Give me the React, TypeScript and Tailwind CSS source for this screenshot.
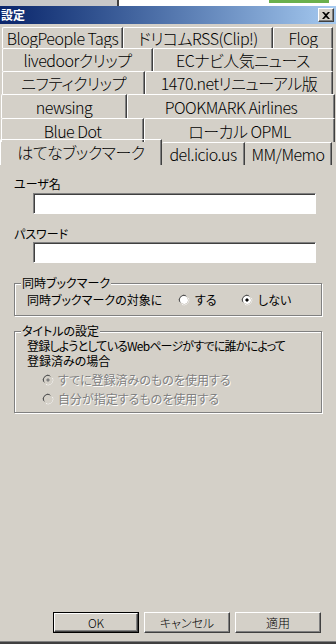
import React from "react";

const font = "[font-family:'Noto_Sans_CJK_JP',sans-serif] [font-feature-settings:'palt']";

type Tab = { label: string; w: number };

const rows: { tabs: Tab[]; pl: number; h: number }[] = [
  { pl: 2, h: 21, tabs: [ { label: "BlogPeople Tags", w: 121 }, { label: "ドリコムRSS(Clip!)", w: 150 }, { label: "Flog", w: 60 } ] },
  { pl: 2, h: 23, tabs: [ { label: "livedoorクリップ", w: 151 }, { label: "ECナビ人気ニュース", w: 180 } ] },
  { pl: 2, h: 23, tabs: [ { label: "ニフティクリップ", w: 143 }, { label: "1470.netリニューアル版", w: 188 } ] },
  { pl: 1, h: 24, tabs: [ { label: "newsing", w: 126 }, { label: "POOKMARK Airlines", w: 208 } ] },
  { pl: 1, h: 24, tabs: [ { label: "Blue Dot", w: 143 }, { label: "ローカル OPML", w: 191 } ] },
];

const tabCls =
  "flex shrink-0 items-center justify-center rounded-tl-[2px] border-l border-t border-white border-r border-r-[#404040] shadow-[inset_-1px_0_0_#808080] text-[16px] font-light leading-none tracking-[-0.5px] text-black";

function Radio({ checked, disabled }: { checked?: boolean; disabled?: boolean }) {
  return (
    <svg width="12" height="12" viewBox="0 0 12 12" className="shrink-0">
      <path d="M1.5 8 A5 5 0 0 1 8 1.5" fill="none" stroke="#808080" strokeWidth="1" />
      <path d="M2.8 8.6 A3.8 3.8 0 0 1 8.6 2.8" fill="none" stroke="#404040" strokeWidth="1" />
      <circle cx="6" cy="6" r="4" fill={disabled ? "#d4d0c8" : "#ffffff"} />
      <path d="M10.5 4 A5 5 0 0 1 4 10.5" fill="none" stroke="#ffffff" strokeWidth="1" />
      <path d="M9.2 3.4 A3.8 3.8 0 0 1 3.4 9.2" fill="none" stroke="#d4d0c8" strokeWidth="1" />
      {checked && <rect x="5" y="4.5" width="2" height="3" fill={disabled ? "#808080" : "#000"} />}
      {checked && <rect x="4.5" y="5" width="3" height="2" fill={disabled ? "#808080" : "#000"} />}
    </svg>
  );
}

function Group({ title, children, h }: { title: string; children: React.ReactNode; h: number }) {
  return (
    <div style={{ height: h }} className="relative mx-[14px] border border-[#808080] shadow-[inset_1px_1px_0_#ffffff,1px_1px_0_#ffffff]">
      <div className="absolute -top-[8px] left-[6px] bg-[#d4d0c8] px-[1px] text-[12px] leading-[14px]">{title}</div>
      {children}
    </div>
  );
}

function Btn({ label, def }: { label: string; def?: boolean }) {
  return (
    <div className={`h-[21px] w-[86px] ${def ? "border border-black" : ""}`}>
      <div className="flex h-full w-full items-center justify-center border border-t-white border-l-white border-b-[#404040] border-r-[#404040] shadow-[inset_-1px_-1px_0_#808080] text-[12px] font-light leading-none">
        {label}
      </div>
    </div>
  );
}

export default function App() {
  return (
    <div className={`${font} relative h-[644px] w-[336px] overflow-hidden bg-[#d4d0c8] text-black`}>
      {/* desktop strip above the window */}
      <div className="flex h-[6px]">
        <div className="w-[117px] bg-[#c8c8c8]" />
        <div className="w-[2px] bg-[#404040]" />
        <div className="relative flex-1 bg-white">
          <div className="absolute left-[150px] top-0 h-[3px] w-[60px] bg-[#6ab04c]" />
        </div>
      </div>
      {/* title bar */}
      <div className="flex h-[18px] items-center justify-between bg-gradient-to-r from-[#0a246a] to-[#a6caf0] pr-[2px]">
        <span className="pl-[1px] text-[12px] font-bold leading-none text-white">設定</span>
        <div className="flex h-[14px] w-[16px] items-center justify-center border border-t-white border-l-white border-b-[#404040] border-r-[#404040] bg-[#d4d0c8] shadow-[inset_-1px_-1px_0_#808080]">
          <svg width="8" height="7" viewBox="0 0 8 7">
            <path d="M0 0 L2 0 L4 2 L6 0 L8 0 L5 3.5 L8 7 L6 7 L4 5 L2 7 L0 7 L3 3.5 Z" fill="#000" />
          </svg>
        </div>
      </div>
      {/* tabs */}
      <div className="pt-[3px]">
        {rows.map((r, i) => (
          <div key={i} className="flex" style={{ paddingLeft: r.pl, height: r.h }}>
            {r.tabs.map((t) => (
              <div key={t.label} style={{ width: t.w }} className={tabCls}>
                <span className="whitespace-nowrap">{t.label}</span>
              </div>
            ))}
          </div>
        ))}
        <div className="flex h-[23px] items-end">
          <div className={`${tabCls} z-10 h-[26px] w-[162px] pb-[2px]`}>はてなブックマーク</div>
          <div className={`${tabCls} h-[23px] w-[83px] border-l-0`}>del.icio.us</div>
          <div className={`${tabCls} h-[23px] w-[87px] border-l-0`}>MM/Memo</div>
        </div>
      </div>
      {/* panel */}
      <div className="flex h-[440px] flex-col pt-[12px]">
        <div className="pl-[14px] text-[12px] leading-[14px]">ユーザ名</div>
        <div className="ml-[33px] mt-[2px] h-[21px] w-[283px] border border-t-[#808080] border-l-[#808080] border-b-white border-r-white bg-white shadow-[inset_1px_1px_0_#404040]" />
        <div className="mt-[13px] pl-[14px] text-[12px] leading-[14px]">パスワード</div>
        <div className="ml-[33px] mt-[1px] h-[21px] w-[283px] border border-t-[#808080] border-l-[#808080] border-b-white border-r-white bg-white shadow-[inset_1px_1px_0_#404040]" />
        <div className="mt-[20px]">
          <Group title="同時ブックマーク" h={33}>
            <div className="flex items-center pl-[12px] pt-[9px] text-[12px] leading-[14px]">
              <span className="w-[151px]">同時ブックマークの対象に</span>
              <Radio />
              <span className="ml-[5px] w-[46px]">する</span>
              <Radio checked />
              <span className="ml-[5px]">しない</span>
            </div>
          </Group>
        </div>
        <div className="mt-[15px]">
          <Group title="タイトルの設定" h={82}>
            <div className="pl-[12px] pt-[6px] text-[12px] leading-[15px]">
              <div className="whitespace-nowrap tracking-[-0.8px]">登録しようとしているWebページがすでに誰かによって</div>
              <div>登録済みの場合</div>
            </div>
            <div className="mt-[4px] flex h-[15px] items-center pl-[27px] text-[12px] leading-[15px] text-[#808080] [text-shadow:1px_1px_0_#ffffff]">
              <Radio checked disabled />
              <span className="ml-[4px]">すでに登録済みのものを使用する</span>
            </div>
            <div className="mt-[4px] flex h-[15px] items-center pl-[27px] text-[12px] leading-[15px] text-[#808080] [text-shadow:1px_1px_0_#ffffff]">
              <Radio disabled />
              <span className="ml-[4px]">自分が指定するものを使用する</span>
            </div>
          </Group>
        </div>
      </div>
      {/* buttons */}
      <div className="flex gap-[5px] pl-[53px] pt-[7px]">
        <Btn label="OK" def />
        <Btn label="キャンセル" />
        <Btn label="適用" />
      </div>
      <div className="absolute bottom-0 left-0 h-[2px] w-full bg-[#404040] shadow-[0_-1px_0_#808080]" />
    </div>
  );
}
